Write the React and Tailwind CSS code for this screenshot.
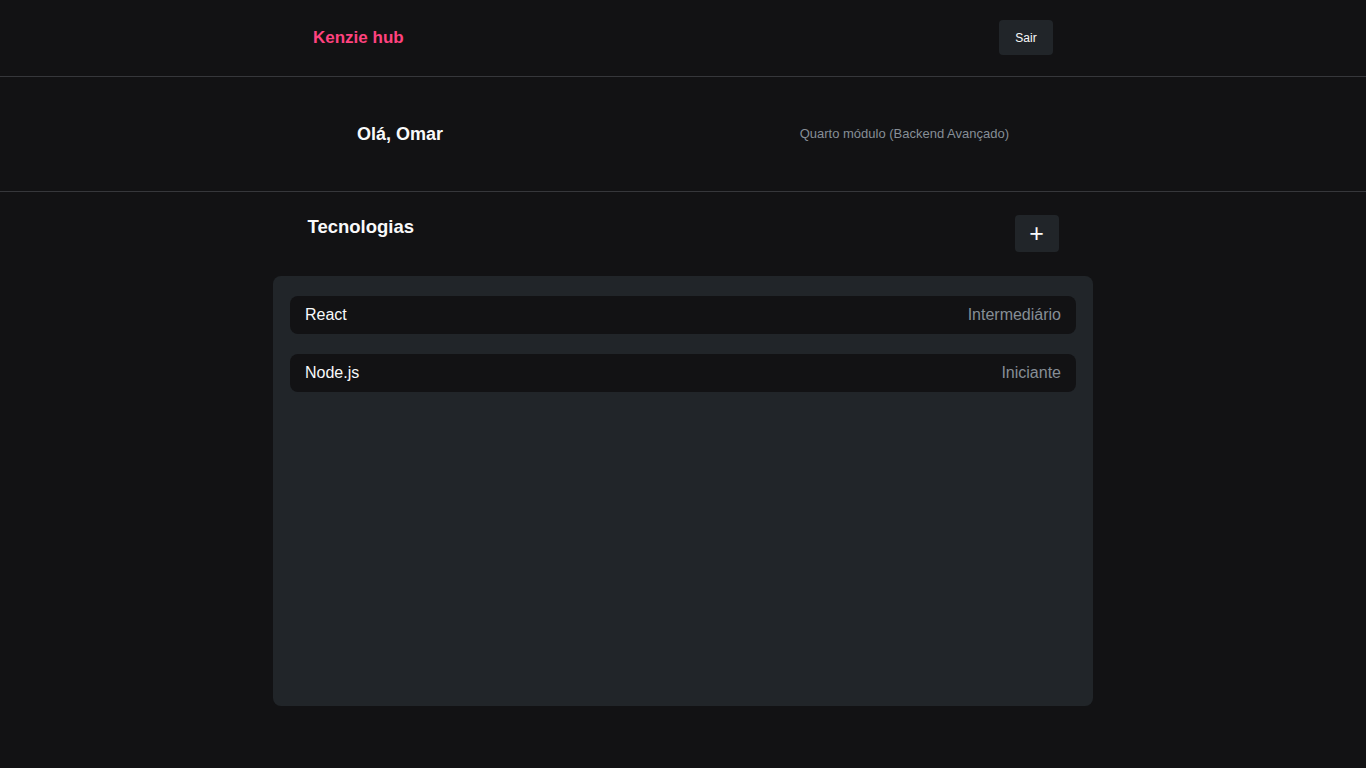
import React from 'react';

const techs = [
  { id: 1, title: 'React', status: 'Intermediário' },
  { id: 2, title: 'Node.js', status: 'Iniciante' },
];

export default function App() {
  return (
    <div className="min-h-screen bg-[#121214] font-['Liberation_Sans',Arial,sans-serif] text-[#f8f9fa]">
      <header className="border-b border-[#36373b]">
        <div className="w-[740px] mx-auto h-[76px] flex items-center justify-between pb-[1px]">
          <h1 className="text-[17px] font-bold text-[#ff427f]">Kenzie hub</h1>
          <button className="w-[54px] h-[35px] bg-[#212529] rounded-[4px] text-[12px] text-[#f8f9fa]">
            Sair
          </button>
        </div>
      </header>

      <section className="border-b border-[#36373b]">
        <div className="w-[652px] mx-auto h-[114px] flex items-center justify-between">
          <h2 className="text-[18px] font-bold">Olá, Omar</h2>
          <span className="text-[13px] text-[#868e96]">Quarto módulo (Backend Avançado)</span>
        </div>
      </section>

      <main>
        <div className="w-[751px] mx-auto pt-[24px] flex items-start justify-between">
          <h3 className="text-[18.5px] font-bold leading-[21px]">Tecnologias</h3>
          <button className="w-[44px] h-[37px] -mt-[1px] bg-[#212529] rounded-[4px] text-[25px] leading-none flex items-center justify-center">
            +
          </button>
        </div>

        <ul className="w-[820px] h-[430px] mx-auto mt-[24px] bg-[#212529] rounded-[8px] px-[17px] pt-[20px] flex flex-col gap-[20px]">
          {techs.map((tech) => (
            <li
              key={tech.id}
              className="h-[38px] bg-[#121214] rounded-[8px] px-[15px] flex items-center justify-between"
            >
              <span className="text-[16px] text-[#f8f9fa]">{tech.title}</span>
              <span className="text-[16px] text-[#868e96]">{tech.status}</span>
            </li>
          ))}
        </ul>
      </main>
    </div>
  );
}
